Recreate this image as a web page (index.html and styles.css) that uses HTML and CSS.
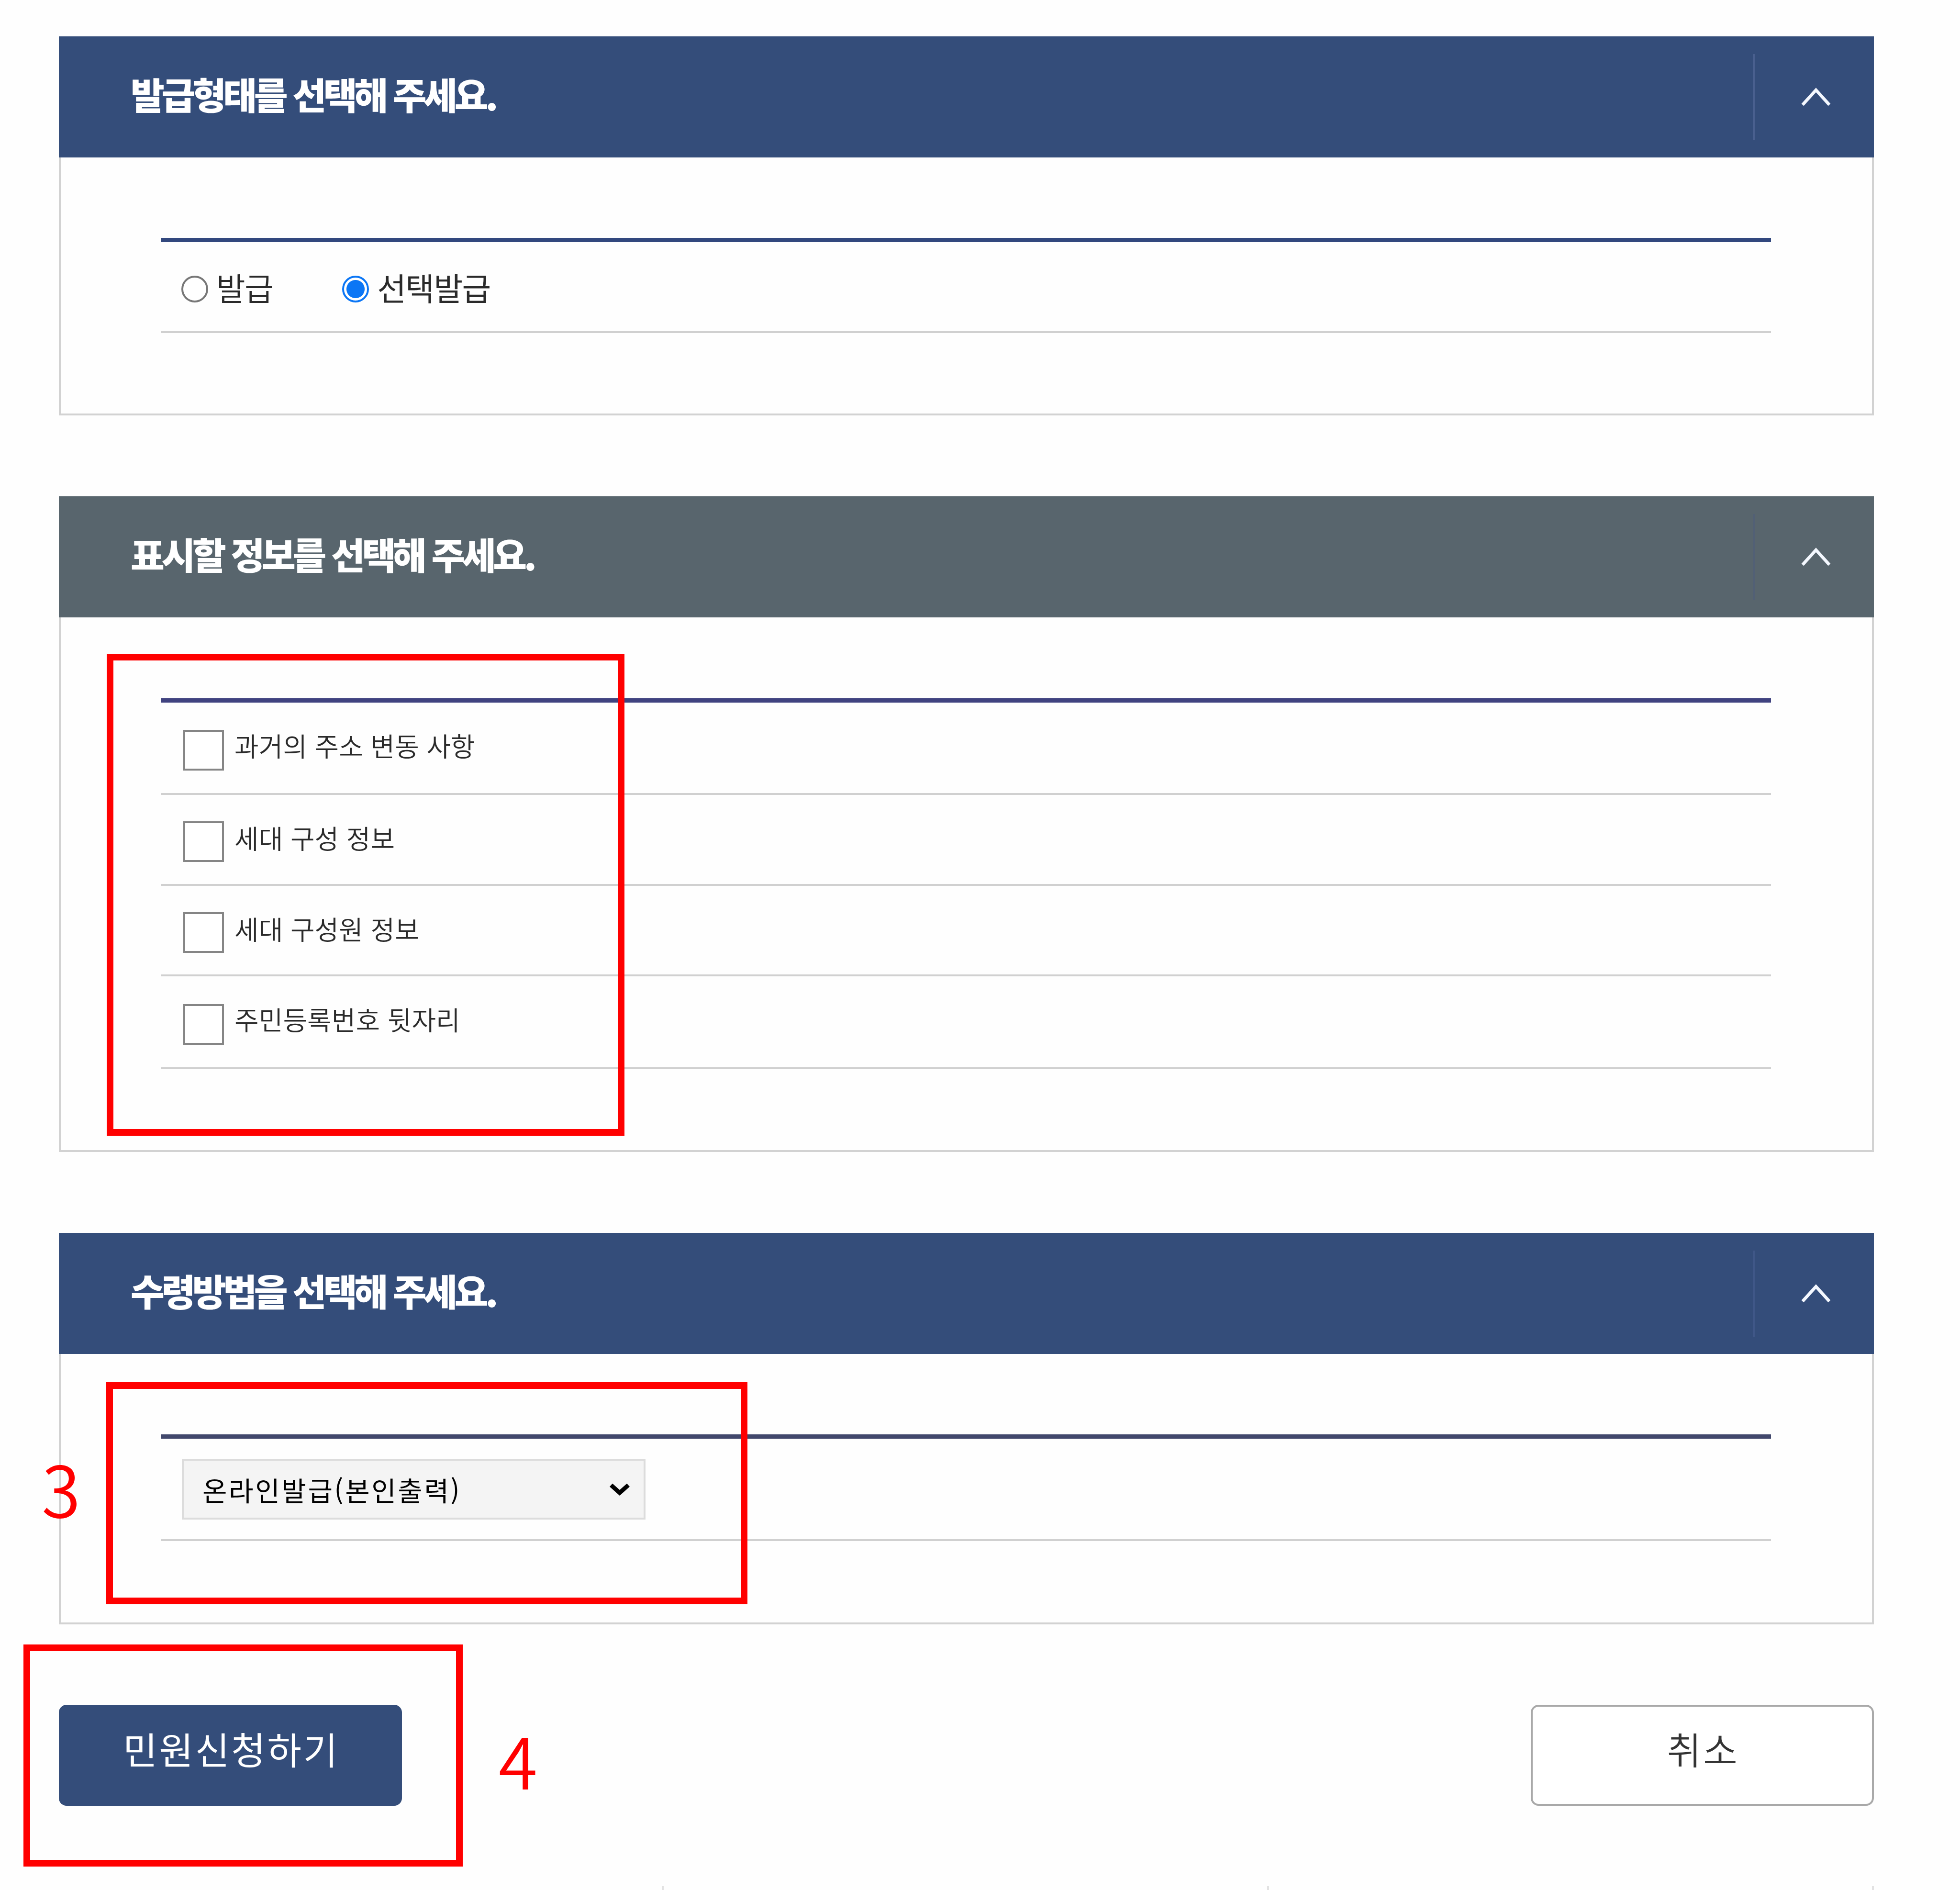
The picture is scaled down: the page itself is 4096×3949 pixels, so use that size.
FILE: index.html
```html
<!DOCTYPE html>
<html lang="ko">
<head>
<meta charset="utf-8">
<title>민원신청</title>
<link rel="stylesheet" href="styles.css">
</head>
<body>
<main class="page">
  <section class="card card-type">
    <header class="card-head">
      <h2 class="card-title">발급형태를 선택해 주세요.</h2>
      <button class="toggle" aria-label="접기"><svg class="chevron" viewBox="0 0 62 40"><path d="M3 36 L31 5 L59 36"/></svg></button>
    </header>
    <div class="card-body">
      <div class="table">
        <div class="row row-radio">
          <label class="radio-item"><input class="radio" type="radio" name="type"><span class="radio-label">발급</span></label>
          <label class="radio-item"><input class="radio" type="radio" name="type" checked><span class="radio-label selected">선택발급</span></label>
        </div>
      </div>
    </div>
  </section>

  <section class="card card-info">
    <header class="card-head">
      <h2 class="card-title">표시할 정보를 선택해 주세요.</h2>
      <button class="toggle" aria-label="접기"><svg class="chevron" viewBox="0 0 62 40"><path d="M3 36 L31 5 L59 36"/></svg></button>
    </header>
    <div class="card-body">
      <div class="table">
        <label class="row row-check row-1"><input class="check" type="checkbox"><span class="check-label">과거의 주소 변동 사항</span></label>
        <label class="row row-check row-2"><input class="check" type="checkbox"><span class="check-label">세대 구성 정보</span></label>
        <label class="row row-check row-3"><input class="check" type="checkbox"><span class="check-label">세대 구성원 정보</span></label>
        <label class="row row-check row-4"><input class="check" type="checkbox"><span class="check-label">주민등록번호 뒷자리</span></label>
      </div>
    </div>
  </section>

  <section class="card card-receive">
    <header class="card-head">
      <h2 class="card-title">수령방법을 선택해 주세요.</h2>
      <button class="toggle" aria-label="접기"><svg class="chevron" viewBox="0 0 62 40"><path d="M3 36 L31 5 L59 36"/></svg></button>
    </header>
    <div class="card-body">
      <div class="table">
        <div class="row row-select">
          <div class="select-box">
            <select class="select"><option>온라인발급(본인출력)</option></select>
            <svg class="caret" viewBox="0 0 46 28"><path d="M5 5 L23 21 L41 5"/></svg>
          </div>
        </div>
      </div>
    </div>
  </section>

  <div class="actions">
    <button class="btn btn-primary">민원신청하기</button>
    <button class="btn btn-cancel">취소</button>
  </div>
  <div class="next-columns"><i></i><i></i><i></i></div>

  <div class="mark mark-info"></div>
  <div class="mark mark-receive"></div>
  <div class="mark mark-submit"></div>
  <span class="step step-3">3</span>
  <span class="step step-4">4</span>
</main>
</body>
</html>
```
FILE: styles.css
```css
* { box-sizing: border-box; }

body {
  margin: 0;
  background: #fefefe;
  color: #2a2a2a;
  font-family: "Noto Sans CJK KR", "Noto Sans", sans-serif;
}

button { border: 0; background: none; padding: 0; font: inherit; }

.page {
  position: relative;
  width: 4096px;
  height: 3949px;
  padding: 76px 180px 0 123px;
  display: flex;
  flex-direction: column;
  overflow: hidden;
}

.card { display: flex; flex-direction: column; flex: none; }
.card-type { height: 792px; --head: #344d7a; --rule: #32487e; --divider: #4a608f; }
.card-info { height: 1370px; margin-top: 169px; --head: #58656d; --rule: #404380; --divider: #526075; }
.card-receive { height: 818px; margin-top: 169px; --head: #344d7a; --rule: #42486c; --divider: #405788; }

.card-head {
  height: 253px;
  flex: none;
  display: flex;
  align-items: center;
  justify-content: space-between;
  padding-left: 150px;
  background: var(--head);
}
.card-title {
  margin: 0;
  padding-bottom: 14px;
  color: #fff;
  font-size: 77px;
  font-weight: 900;
  line-height: 1;
  letter-spacing: -6.4px;
  word-spacing: 1px;
  white-space: nowrap;
}
.toggle {
  width: 253px;
  height: 180px;
  padding-left: 7px;
  border-left: 4px solid var(--divider);
  display: flex;
  justify-content: center;
  align-items: center;
}
.chevron { width: 62px; height: 40px; fill: none; stroke: #f4f8ff; stroke-width: 6.5; }

.card-body {
  flex: 1;
  padding: 169px 211px 0 210px;
  border: 4px solid #d2d2d2;
  border-top: 0;
}
.card-type .card-body { padding-top: 168px; }
.card-receive .card-body { padding-top: 168px; }

.table { border-top: 9px solid var(--rule); }
.row { display: flex; align-items: center; border-bottom: 4px solid #d0d0d0; }

.row-radio { height: 190px; padding: 5px 0 0 42px; font-size: 66px; line-height: 1; }
.radio-item { display: flex; align-items: center; letter-spacing: -1.6px; margin-right: 145px; }
.radio {
  appearance: none;
  width: 56px;
  height: 56px;
  margin: 5px 17px 0 0;
  border: 4px solid #777;
  border-radius: 50%;
  background: #fff;
}
.radio:checked { border-color: #0b76f5; background: radial-gradient(circle, #0b76f5 18.5px, #fff 19.5px); }
.radio-label { padding-bottom: 5px; font-weight: 350; }
.radio-label.selected { font-weight: 400; }

.row-check { padding-left: 46px; font-size: 55px; font-weight: 350; line-height: 1; }
.row-1 { height: 193px; padding-top: 10px; --lift: 23px; }
.row-2 { height: 190px; padding-top: 9px; --lift: 18px; }
.row-3 { height: 189px; padding-top: 9px; --lift: 17px; }
.row-4 { height: 194px; padding-top: 11px; --lift: 24px; }
.check {
  appearance: none;
  width: 85px;
  height: 85px;
  margin: 0 22px 0 0;
  border: 4px solid #858585;
  border-radius: 0;
  background: #fff;
}
.check-label { padding-bottom: var(--lift); letter-spacing: 0.1px; }

.row-select { height: 214px; padding-left: 43px; }
.select-box { position: relative; width: 969px; height: 127px; }
.select {
  appearance: none;
  width: 100%;
  height: 100%;
  padding: 0 0 0 39px;
  border: 4px solid #dcdcdc;
  border-radius: 0;
  background: #f4f4f4;
  color: #000;
  font-family: inherit;
  font-size: 56px;
  letter-spacing: 3.6px;
}
.caret { position: absolute; right: 31px; top: 50px; width: 46px; height: 28px; fill: none; stroke: #000; stroke-width: 9; }

.actions { margin-top: 168px; display: flex; justify-content: space-between; }
.btn {
  width: 717px;
  height: 211px;
  padding-bottom: 29px;
  border-radius: 16px;
  font-size: 78px;
  line-height: 1;
  letter-spacing: 3.6px;
}
.btn-primary { background: #344d7a; color: #fff; padding-left: 3px; }
.btn-cancel { border: 4px solid #a9a9a9; background: #fff; color: #333; font-weight: 350; padding-left: 3px; }

/* tops of the columns that continue below the fold */
.next-columns { margin-top: 168px; padding-left: 1260px; display: flex; justify-content: space-between; }
.next-columns i { width: 4px; height: 8px; background: #e2e2e2; }

.mark { position: absolute; border: 14px solid #f00; }
.mark-info { left: 223px; top: 1366px; width: 1082px; height: 1007px; }
.mark-receive { left: 222px; top: 2888px; width: 1340px; height: 464px; }
.mark-submit { left: 49px; top: 3436px; width: 918px; height: 464px; }

.step { position: absolute; color: #f00; font-size: 148px; font-weight: 350; line-height: 1; }
.step-3 { left: 87px; top: 3033px; }
.step-4 { left: 1042px; top: 3601px; }
```
